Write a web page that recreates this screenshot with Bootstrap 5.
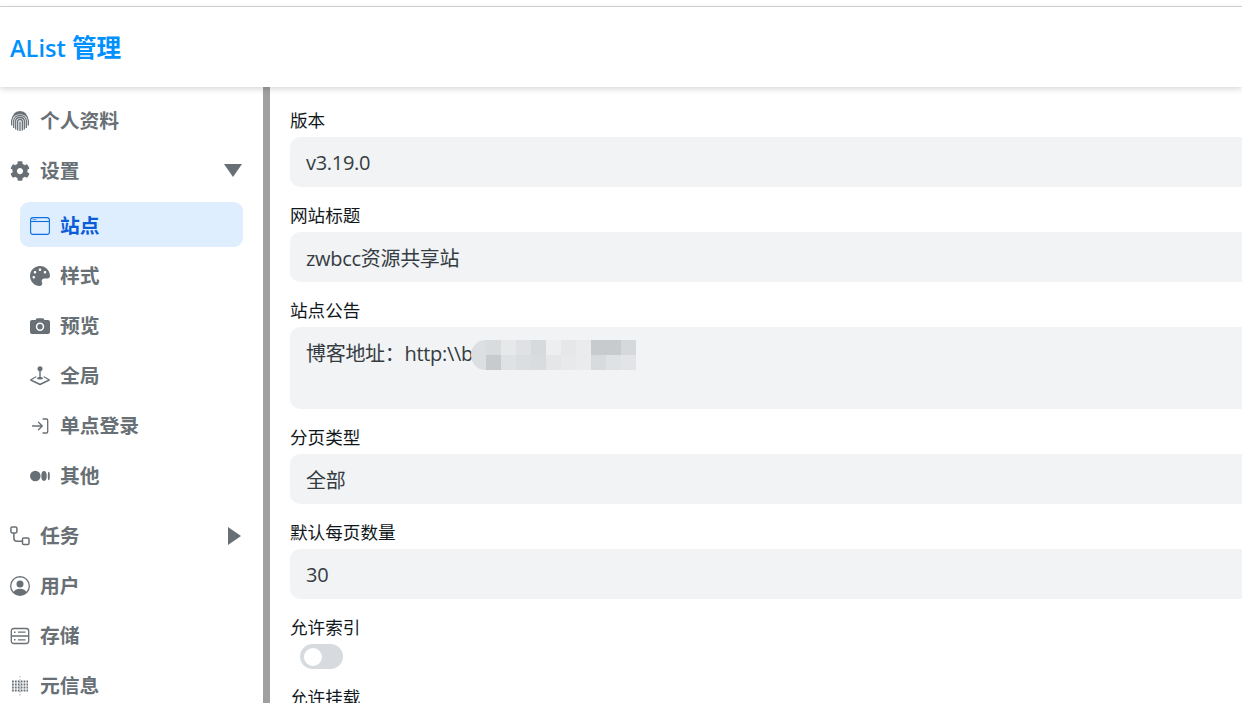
<!DOCTYPE html>
<html lang="zh-CN">
<head>
    <meta charset="UTF-8">
    <meta name="viewport" content="width=device-width, initial-scale=1.0">
    <title>AList 管理</title>
    <link href="https://cdn.jsdelivr.net/npm/bootstrap@5.3.0/dist/css/bootstrap.min.css" rel="stylesheet">
    <style>
        html, body { height: 100%; overflow: hidden; }
        body { font-family: "Open Sans", "Noto Sans CJK SC", sans-serif; font-size: 17.6px; color: #11181c; background: #fff; }
        .top-strip { height: 7px; border-bottom: 1px solid #d4d4d4; flex: none; }
        .app-header { height: 80px; flex: none; box-shadow: 0 2px 6px rgba(0, 0, 0, .16); position: relative; z-index: 2; padding: 2px 0 0 10px; }
        .app-title { color: #0091ff; font-size: 23.6px; font-weight: 600; }
        .app-title span { font-size: 24.6px; }
        .side-panel { width: 270px; flex: none; border-right: 7px solid #a0a0a0; padding: 10px 20px 0 0; overflow: hidden; }
        .side-list { list-style: none; margin: 0; padding: 0; }
        .side-link { height: 45px; padding: 2px 0 0 10px; gap: 10px; margin-bottom: 5px; border-radius: 9px; color: #687076; font-size: 19.8px; font-weight: 700; text-decoration: none; }
        .side-link svg.ico { width: 20px; height: 20px; flex: none; }
        .side-link.active-link { background: #dfeeff; color: #0b5cd7; }
        .side-sub { padding-left: 20px; margin: 10px 0 15px; }
        .arrow-ico { margin-left: auto; margin-right: 1px; flex: none; }
        .form-area { padding: 20px 0 0 20px; min-width: 0; }
        .field-row { margin-bottom: 15px; }
        .field-label { display: block; line-height: 26px; margin-bottom: 4px; font-size: 17.6px; color: #11181c; }
        .field-input.form-control { width: 1100px; height: 50px; padding: 1px 16px 0; background: #f1f3f5; border: 0; border-radius: 10px; font-size: 20px; letter-spacing: -.3px; color: #353c42; box-shadow: none; }
        .field-text.form-control { height: 82px; padding: 14px 16px 10px; resize: none; line-height: 26px; }
        .field-wrap { position: relative; }
        .mosaic { position: absolute; left: 181px; top: 13px; width: 165px; height: 30px; }
        .switch-box.form-switch { padding-left: 10px; margin: 0; min-height: 0; line-height: 0; }
        .switch-box .form-check-input { width: 43px; height: 25px; margin: 0; float: none; border: 0; background-color: #d7dbdf; background-position: 4px center; background-size: 18px 18px; background-image: url("data:image/svg+xml,%3csvg xmlns='http://www.w3.org/2000/svg' viewBox='-4 -4 8 8'%3e%3ccircle r='4' fill='%23fff'/%3e%3c/svg%3e"); }
    </style>
</head>
<body class="d-flex flex-column">
    <div class="top-strip"></div>
    <header class="app-header d-flex align-items-center">
        <div class="app-title">AList <span>管理</span></div>
    </header>

    <div class="d-flex flex-grow-1 overflow-hidden">
        <aside class="side-panel">
            <ul class="side-list">
                <li><a href="#" class="side-link d-flex align-items-center">
                    <svg class="ico" viewBox="0 0 20 20" fill="none" stroke="#687076" stroke-width="1.300">
                        <path d="M4 3.400A8 8 0 0 1 16 3.400M2.600 6.200A8.500 8.500 0 0 1 17.400 6.200M1.700 14.500V9.500C1.700 5.500 5.500 2.500 10 2.500s8.300 3 8.300 7v5M3.700 17V9.700C3.700 6.500 6.500 4.500 10 4.500s6.300 2 6.300 5.200V17M5.700 18.500V9.800C5.700 7.800 7.700 6.500 10 6.500s4.300 1.300 4.300 3.300v8.700M7.700 19.500V10C7.700 9 8.800 8.500 10 8.500s2.300.5 2.300 1.500v9.500M10 10.500V20"/>
                    </svg>
                    个人资料</a></li>
                <li><a href="#" class="side-link d-flex align-items-center">
                    <svg class="ico" viewBox="0 0 512 512" fill="#687076"><path d="M487.4 315.7l-42.6-24.6c4.3-23.2 4.3-47 0-70.2l42.6-24.6c4.9-2.8 7.1-8.6 5.500-14-11.1-35.6-30-67.8-54.7-94.6-3.8-4.1-10-5.1-14.8-2.3L380.8 110c-17.9-15.4-38.5-27.3-60.8-35.1V25.8c0-5.6-3.9-10.5-9.4-11.7-36.7-8.2-74.3-7.8-109.2 0-5.5 1.2-9.4 6.1-9.4 11.7V75c-22.2 7.9-42.8 19.8-60.8 35.1L88.7 85.5c-4.9-2.8-11-1.9-14.8 2.3-24.7 26.7-43.6 58.9-54.7 94.6-1.7 5.4.6 11.2 5.500 14L67.3 221c-4.3 23.2-4.3 47 0 70.2l-42.6 24.6c-4.9 2.8-7.1 8.6-5.500 14 11.1 35.6 30 67.8 54.7 94.6 3.8 4.1 10 5.1 14.8 2.3l42.6-24.6c17.9 15.4 38.5 27.3 60.8 35.1v49.2c0 5.6 3.9 10.5 9.4 11.7 36.7 8.2 74.3 7.8 109.2 0 5.5-1.2 9.4-6.1 9.4-11.7v-49.2c22.2-7.9 42.8-19.8 60.8-35.1l42.6 24.6c4.9 2.8 11 1.9 14.8-2.3 24.7-26.7 43.6-58.9 54.7-94.6 1.5-5.500-.7-11.3-5.6-14.1zM256 336c-44.1 0-80-35.9-80-80s35.9-80 80-80 80 35.9 80 80-35.9 80-80 80z"/></svg>
                    设置
                    <svg class="arrow-ico" width="18" height="13" viewBox="0 0 18 13" fill="#687076"><polygon points="0,0 18,0 9,13"/></svg></a>
                    <ul class="side-list side-sub">
                        <li><a href="#" class="side-link active-link d-flex align-items-center">
                            <svg class="ico" viewBox="0 0 20 20" fill="none" stroke="#0b6fe0" stroke-width="1.1"><rect x=".6" y="1.600" width="18.800" height="16.800" rx="2.500"/><path d="M.6 5.500h18.800"/><path d="M2.500 3.600h4" stroke-width=".7"/></svg>
                            站点</a></li>
                        <li><a href="#" class="side-link d-flex align-items-center">
                            <svg class="ico" viewBox="0 0 512 512" fill="#687076"><path d="M204.3 5C104.9 24.4 24.8 104.3 5.200 203.4c-37 187 131.7 326.4 258.8 306.7 41.2-6.4 61.4-54.6 42.5-91.7-23.1-45.4 9.900-98.4 60.9-98.4h79.7c35.8 0 64.8-29.6 64.9-65.3C511.500 97.100 368.100-26.900 204.3 5zM96 320c-17.7 0-32-14.3-32-32s14.3-32 32-32 32 14.3 32 32-14.3 32-32 32zm32-128c-17.7 0-32-14.3-32-32s14.3-32 32-32 32 14.3 32 32-14.3 32-32 32zm128-64c-17.7 0-32-14.3-32-32s14.3-32 32-32 32 14.3 32 32-14.3 32-32 32zm128 64c-17.7 0-32-14.3-32-32s14.3-32 32-32 32 14.3 32 32-14.3 32-32 32z"/></svg>
                            样式</a></li>
                        <li><a href="#" class="side-link d-flex align-items-center">
                            <svg class="ico" viewBox="0 0 20 20" fill="#687076" fill-rule="evenodd"><path d="M2 4h3.500l1.200-1.800h6.600L14.500 4H18a2 2 0 0 1 2 2v10a2 2 0 0 1-2 2H2a2 2 0 0 1-2-2V6a2 2 0 0 1 2-2zM10 6.500a4.200 4.200 0 1 0 0 8.400 4.200 4.200 0 0 0 0-8.400zM10 8a2.700 2.700 0 1 1 0 5.400A2.700 2.700 0 0 1 10 8z"/></svg>
                            预览</a></li>
                        <li><a href="#" class="side-link d-flex align-items-center">
                            <svg class="ico" viewBox="0 0 20 20" fill="#687076"><circle cx="10" cy="2.700" r="2.500"/><rect x="9.300" y="4" width="1.400" height="8.500"/><ellipse cx="10" cy="12.200" rx="3" ry="1.300"/><path d="M6.300 10v1.300L2 13.700l8 3.700 8-3.700-4.300-2.400V10l5.300 2.900c1.300.7 1.300 1.400 0 2.100l-8.200 4c-.6.300-1 .3-1.600 0L1 15c-1.300-.7-1.300-1.400 0-2.100z"/></svg>
                            全局</a></li>
                        <li><a href="#" class="side-link d-flex align-items-center">
                            <svg class="ico" viewBox="0 0 20 20" fill="none" stroke="#687076" stroke-width="1.300" stroke-linecap="round" stroke-linejoin="round"><path d="M13 3h3.500c.8 0 1.200.4 1.200 1.200v11.600c0 .8-.4 1.200-1.200 1.200H13"/><path d="M2.500 10H12M8.500 6.200 12.300 10l-3.800 3.800"/></svg>
                            单点登录</a></li>
                        <li><a href="#" class="side-link d-flex align-items-center">
                            <svg class="ico" viewBox="0 0 20 20" fill="#687076"><circle cx="5.300" cy="10" r="5.300"/><ellipse cx="14" cy="10" rx="2.700" ry="4.900"/><ellipse cx="18.800" cy="10" rx="1" ry="4.300"/></svg>
                            其他</a></li>
                    </ul></li>
                <li><a href="#" class="side-link d-flex align-items-center">
                    <svg class="ico" viewBox="0 0 20 20" fill="none" stroke="#687076" stroke-width="1.500"><rect x=".9" y=".9" width="6" height="6" rx="1.300"/><rect x="12.500" y="12" width="6.500" height="6.500" rx="1.300"/><path d="M3.900 7v5.500c0 2 1 2.700 2.800 2.700h5.800"/></svg>
                    任务
                    <svg class="arrow-ico" width="16" height="18" viewBox="0 0 16 18" fill="#687076"><polygon points="2,0 15,9 2,18"/></svg></a></li>
                <li><a href="#" class="side-link d-flex align-items-center">
                    <svg class="ico" viewBox="0 0 20 20" fill="#687076" fill-rule="evenodd"><path d="M10 0a10 10 0 1 1 0 20 10 10 0 0 1 0-20zm0 1.400a8.600 8.600 0 0 0-6.400 14.300C5 13.600 7.300 12.700 10 12.700s5 .9 6.400 3A8.600 8.600 0 0 0 10 1.400z"/><circle cx="10" cy="8" r="3.500"/></svg>
                    用户</a></li>
                <li><a href="#" class="side-link d-flex align-items-center">
                    <svg class="ico" viewBox="0 0 20 20" fill="none" stroke="#687076" stroke-width="1.300"><rect x="1.300" y="2.500" width="17.400" height="15" rx="2.500"/><path d="M1.300 10h17.400M8 6.200h7.500M8 13.800h7.500"/><path d="M4 6.200h1.500M4 13.800h1.500" stroke-width="1.600"/></svg>
                    存储</a></li>
                <li><a href="#" class="side-link d-flex align-items-center">
                    <svg class="ico" viewBox="0 0 20 20" fill="none" stroke="#687076">
                        <path d="M2 5.500H18M2 8.500H18M2 11.500H18M2 14.500H18" stroke-width="1.800" stroke-dasharray="1.800 1.100"/>
                        <path d="M10 0V20" stroke-width="1" stroke-dasharray="1.500 1.500" opacity=".55"/>
                    </svg>
                    元信息</a></li>
            </ul>
        </aside>

        <main class="form-area flex-grow-1 overflow-hidden">
            <div class="field-row">
                <label class="field-label">版本</label>
                <input class="field-input form-control" value="v3.19.0" readonly>
            </div>
            <div class="field-row">
                <label class="field-label">网站标题</label>
                <input class="field-input form-control" value="zwbcc资源共享站" readonly>
            </div>
            <div class="field-row">
                <label class="field-label">站点公告</label>
                <div class="field-wrap">
                    <textarea class="field-input field-text form-control" readonly>博客地址：http:\\b</textarea>
                    <svg class="mosaic" viewBox="0 0 165 30">
                        <path d="M15 0C5 0 0 8 0 15S5 30 15 30z" fill="#dcdfe2"/>
                        <rect x="15" width="15" height="15" fill="#d9dcdf"/><rect x="30" width="15" height="15" fill="#e6e8ea"/><rect x="45" width="15" height="15" fill="#dfe1e4"/><rect x="60" width="15" height="15" fill="#d7dadd"/><rect x="75" width="15" height="15" fill="#eceef0"/><rect x="90" width="15" height="15" fill="#e5e7e9"/><rect x="105" width="15" height="15" fill="#e9ebed"/><rect x="120" width="30" height="15" fill="#c8cbce"/><rect x="150" width="15" height="15" fill="#d6d9dc"/>
                        <rect x="15" y="15" width="15" height="15" fill="#c7cbce"/><rect x="30" y="15" width="15" height="15" fill="#dfe2e4"/><rect x="45" y="15" width="15" height="15" fill="#dbdee1"/><rect x="60" y="15" width="15" height="15" fill="#d9dcdf"/><rect x="75" y="15" width="15" height="15" fill="#e4e6e8"/><rect x="90" y="15" width="15" height="15" fill="#e7e9eb"/><rect x="105" y="15" width="15" height="15" fill="#e9ebed"/><rect x="120" y="15" width="15" height="15" fill="#d8dbde"/><rect x="135" y="15" width="15" height="15" fill="#dfe2e4"/><rect x="150" y="15" width="15" height="15" fill="#e2e4e7"/>
                    </svg>
                </div>
            </div>
            <div class="field-row">
                <label class="field-label">分页类型</label>
                <input class="field-input form-control" value="全部" readonly>
            </div>
            <div class="field-row">
                <label class="field-label">默认每页数量</label>
                <input class="field-input form-control" value="30" readonly>
            </div>
            <div class="field-row">
                <label class="field-label">允许索引</label>
                <div class="switch-box form-check form-switch">
                    <input class="form-check-input" type="checkbox" role="switch">
                </div>
            </div>
            <div class="field-row">
                <label class="field-label">允许挂载</label>
            </div>
        </main>
    </div>

    <script src="https://cdn.jsdelivr.net/npm/bootstrap@5.3.0/dist/js/bootstrap.bundle.min.js"></script>
</body>
</html>
